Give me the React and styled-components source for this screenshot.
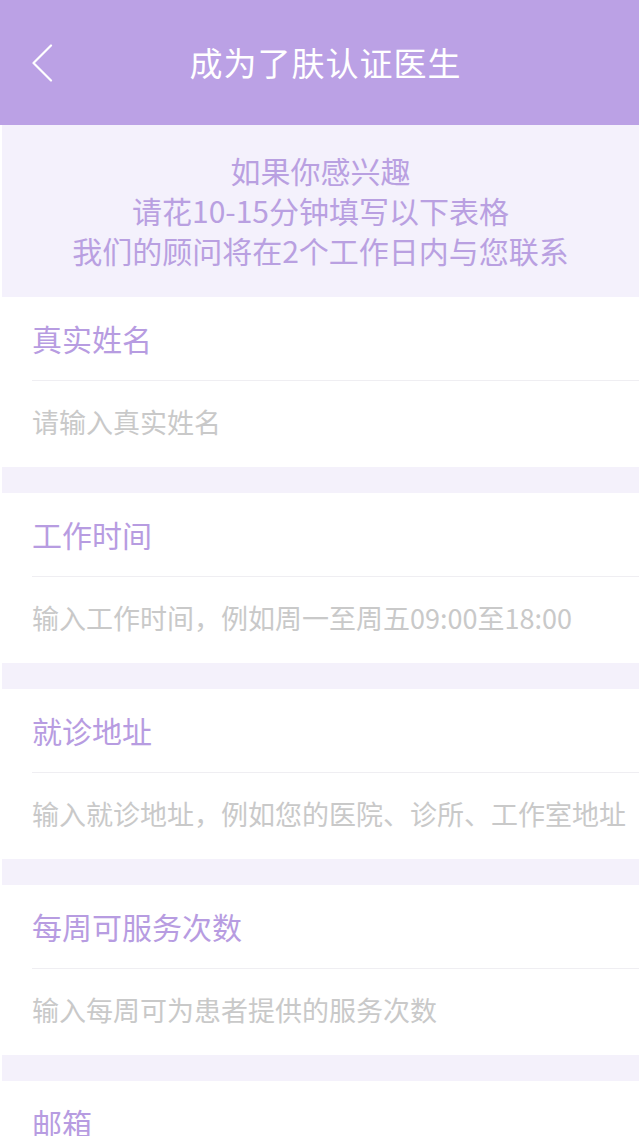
import React from "react";
import styled, { createGlobalStyle } from "styled-components";

const GlobalStyle = createGlobalStyle`
  html, body {
    margin: 0;
    padding: 0;
    background: #ffffff;
    font-family: "Noto Sans CJK SC", "Noto Sans", sans-serif;
    overflow: hidden;
  }
`;

const Page = styled.div`
  width: 639px;
  display: flex;
  flex-direction: column;
`;

const Header = styled.header`
  height: 125px;
  background: #bba1e5;
  display: grid;
  grid-template-columns: 1fr auto 1fr;
  align-items: center;
`;

const BackButton = styled.button`
  justify-self: start;
  margin-left: 31px;
  padding: 0;
  border: 0;
  background: transparent;
  display: flex;
  cursor: pointer;
`;

const Title = styled.h1`
  margin: 0;
  padding-left: 12px;
  font-size: 33px;
  font-weight: 400;
  line-height: 125px;
  letter-spacing: 1px;
  color: #ffffff;
`;

const Body = styled.div`
  padding-left: 2px;
  background: #ffffff;
  display: flex;
  flex-direction: column;
`;

const Intro = styled.div`
  background: #f4f1fc;
  padding: 25px 0 27px;
  text-align: center;
  font-size: 30px;
  line-height: 40px;
  color: #b9a0e1;
`;

const Gap = styled.div`
  height: 26px;
  background: #f4f1fb;
`;

const Field = styled.section`
  background: #ffffff;
  padding-left: 30px;
  display: flex;
  flex-direction: column;
`;

const Label = styled.div`
  height: 83px;
  line-height: 83px;
  font-size: 30px;
  color: #b79ce1;
  border-bottom: 1px solid #efeef2;
`;

const Input = styled.input`
  height: 86px;
  padding: 0 0 5px;
  border: 0;
  outline: none;
  background: transparent;
  font-family: inherit;
  font-size: 27px;
  color: #888;
  box-sizing: border-box;

  &::placeholder {
    color: #c9c9c9;
  }
`;

const fields = [
  { label: "真实姓名", placeholder: "请输入真实姓名" },
  {
    label: "工作时间",
    placeholder: "输入工作时间，例如周一至周五09:00至18:00",
  },
  {
    label: "就诊地址",
    placeholder: "输入就诊地址，例如您的医院、诊所、工作室地址",
  },
  { label: "每周可服务次数", placeholder: "输入每周可为患者提供的服务次数" },
  { label: "邮箱", placeholder: "请输入邮箱" },
];

const App = () => {
  return (
    <Page>
      <GlobalStyle />
      <Header>
        <BackButton aria-label="返回">
          <svg width="22" height="38" viewBox="0 0 22 38" fill="none">
            <path
              d="M20 1.5 L2.5 19 L20 36.5"
              stroke="#ffffff"
              strokeWidth="2.2"
              strokeLinecap="round"
              strokeLinejoin="round"
            />
          </svg>
        </BackButton>
        <Title>成为了肤认证医生</Title>
        <span />
      </Header>
      <Body>
        <Intro>
          如果你感兴趣
          <br />
          请花10-15分钟填写以下表格
          <br />
          我们的顾问将在2个工作日内与您联系
        </Intro>
        {fields.map((f, i) => (
          <React.Fragment key={f.label}>
            {i > 0 && <Gap />}
            <Field>
              <Label>{f.label}</Label>
              <Input placeholder={f.placeholder} />
            </Field>
          </React.Fragment>
        ))}
      </Body>
    </Page>
  );
};

export default App;
